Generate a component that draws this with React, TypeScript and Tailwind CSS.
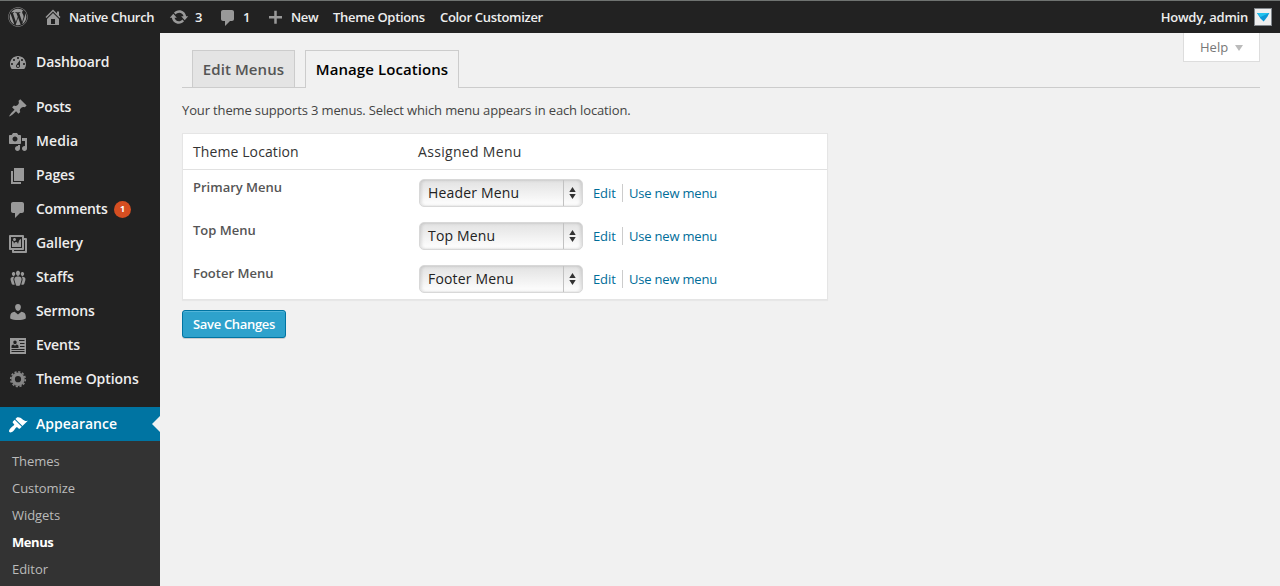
import React from "react";
import { FaWordpress } from "react-icons/fa";

const PATHS = {
  dashboard:
    "M3.76 16h12.48c1.1-1.37 1.76-3.11 1.76-5 0-4.42-3.58-8-8-8s-8 3.58-8 8c0 1.89.66 3.63 1.76 5zM10 4c.55 0 1 .45 1 1s-.45 1-1 1-1-.45-1-1 .45-1 1-1zM6 6c.55 0 1 .45 1 1s-.45 1-1 1-1-.45-1-1 .45-1 1-1zm8 0c.55 0 1 .45 1 1s-.45 1-1 1-1-.45-1-1 .45-1 1-1zm-5.37 5.55L12 7v6c0 1.1-.9 2-2 2s-2-.9-2-2c0-.57.24-1.08.63-1.45zM4 10c.55 0 1 .45 1 1s-.45 1-1 1-1-.45-1-1 .45-1 1-1zm12 0c.55 0 1 .45 1 1s-.45 1-1 1-1-.45-1-1 .45-1 1-1zm-5 3c0-.55-.45-1-1-1s-1 .45-1 1 .45 1 1 1 1-.45 1-1z",
  posts:
    "M10.44 3.02l1.82-1.82 6.36 6.35-1.83 1.82c-1.05-.68-2.48-.57-3.41.36l-.75.75c-.92.93-1.04 2.35-.35 3.41l-1.83 1.82-2.41-2.41-2.8 2.79c-.42.42-3.38 2.71-3.8 2.29s1.86-3.39 2.28-3.81l2.79-2.79L4.1 9.36l1.83-1.82c1.05.69 2.48.57 3.4-.36l.75-.75c.93-.92 1.05-2.35.36-3.41z",
  media:
    "M13 11V4c0-.55-.45-1-1-1h-1.67L9 1H5L3.67 3H2c-.55 0-1 .45-1 1v7c0 .55.45 1 1 1h10c.55 0 1-.45 1-1zM7 4.5c1.38 0 2.5 1.12 2.5 2.5S8.38 9.5 7 9.5 4.5 8.38 4.5 7 5.62 4.5 7 4.5zM14 6h5v10.5c0 1.38-1.12 2.5-2.5 2.5S14 17.88 14 16.5s1.12-2.5 2.5-2.5c.17 0 .34.02.5.05V9h-3V6zm-4 8.05V13h2v3.5c0 1.38-1.12 2.5-2.5 2.5S7 17.88 7 16.5 8.12 14 9.5 14c.17 0 .34.02.5.05z",
  pages: "M6 15V2h10v13H6zm-1 1h8v2H3V5h2v11z",
  comments:
    "M5 2h9c1.1 0 2 .9 2 2v7c0 1.1-.9 2-2 2h-2l-5 5v-5H5c-1.1 0-2-.9-2-2V4c0-1.1.9-2 2-2z",
  gallery:
    "M16 4h1.96c.57 0 1.04.47 1.04 1.04v12.92c0 .57-.47 1.04-1.04 1.04H5.04C4.47 19 4 18.53 4 17.96V16H2.04C1.47 16 1 15.53 1 14.96V2.04C1 1.47 1.47 1 2.04 1h12.92c.57 0 1.04.47 1.04 1.04V4zM3 14h11V3H3v11zm5-8.5C8 4.67 7.33 4 6.5 4S5 4.67 5 5.5 5.67 7 6.5 7 8 6.33 8 5.5zm2 4.5s1-5 3-5v8H4V7c2 0 2 3 2 3s.33-2 2-2 2 2 2 2zm7 7V6h-1v8.96c0 .57-.47 1.04-1.04 1.04H6v1h11z",
  staffs:
    "M8.03 4.46c-.29 1.28.55 3.46 1.97 3.46 1.41 0 2.25-2.18 1.96-3.46-.22-.98-1.08-1.63-1.96-1.63-.89 0-1.74.65-1.97 1.63zm-4.13.9c-.25 1.08.47 2.93 1.67 2.93s1.92-1.85 1.67-2.93c-.19-.83-.92-1.39-1.67-1.39s-1.48.56-1.67 1.39zm8.86 0c-.25 1.08.47 2.93 1.66 2.93 1.2 0 1.92-1.85 1.67-2.93-.19-.83-.92-1.39-1.67-1.39-.74 0-1.47.56-1.66 1.39zm-.59 11.43l1.25-4.3C14.2 10 12.71 8.47 10 8.47c-2.72 0-4.21 1.53-3.44 4.02l1.26 4.3C8.05 17.51 9 18 10 18c.98 0 1.94-.49 2.17-1.21zm-6.1-7.63c-.49.67-.96 1.83-.42 3.59l1.12 3.79c-.34.2-.77.31-1.2.31-.85 0-1.65-.41-1.85-1.03l-1.07-3.65c-.65-2.11.61-3.4 2.92-3.4.27 0 .54.02.79.06-.1.1-.2.22-.29.33zm8.35-.39c2.31 0 3.58 1.29 2.92 3.4l-1.07 3.65c-.2.62-1 1.03-1.85 1.03-.43 0-.86-.11-1.2-.31l1.11-3.77c.55-1.78.08-2.94-.42-3.61-.08-.11-.18-.23-.28-.33.25-.04.51-.06.79-.06z",
  sermons:
    "M10 2c1.7 0 2.9 1.3 2.9 3.1S11.700 9 10 9 7.100 6.900 7.100 5.100 8.300 2 10 2zM6.600 9.800L10 12.600l3.400-2.800c2.600.3 4.400 1.700 4.400 4.600v2.100c-2 1-4.800 1.500-7.800 1.500s-5.800-.5-7.800-1.500v-2.100c0-2.900 1.800-4.300 4.400-4.600z",
  events:
    "M2 2h16v16H2V2zm5 2.500c-1 0-1.700.8-1.700 1.800S6 8.300 7 8.300s1.700-1 1.700-2-.7-1.800-1.700-1.800zM3.500 12h7v-1.600c0-1.100-.9-1.700-2-1.800L7 9.800 5.500 8.600c-1.100.1-2 .7-2 1.800V12zM11 4v1h5.500V4H11zm1 3v1h4.500V7H12zm0 3v1h4.500v-1H12zm-8.500 3v1h13v-1h-13zm0 2v1h13v-1h-13z",
  appearance:
    "M14.480 11.060L7.410 3.990l1.500-1.500c.5-.56 2.300-.47 3.510.32 1.210.8 1.430 1.280 2.910 2.100 1.180.64 2.450 1.260 4.450.85zm-.71.71L6.700 4.700 4.930 6.470c-.39.39-.39 1.020 0 1.410l1.060 1.060c.39.39.39 1.030 0 1.420-.6.6-1.430 1.110-2.210 1.690-.35.26-.7.53-1.010.84C1.430 14.230.4 16.080 1.400 17.070c.99 1 2.840-.03 4.180-1.360.31-.31.58-.66.85-1.020.57-.78 1.080-1.610 1.690-2.210.39-.39 1.020-.39 1.410 0l1.060 1.060c.39.39 1.020.39 1.410 0z",
  home: "M16 8.500l1.530 1.530-1.060 1.060L10 4.600l-6.470 6.490-1.060-1.060L10 2.500l4 4v-2h2v4zm-6-2.460l6 5.990V18H4v-5.970zM12 17v-5H8v5h4z",
  update:
    "M10.200 3.280c3.530 0 6.430 2.610 6.920 6h2.080l-3.500 4-3.500-4h2.320c-.45-1.970-2.210-3.450-4.320-3.450-1.450 0-2.730.71-3.540 1.780L4.950 5.660C6.230 4.200 8.110 3.280 10.200 3.280zm-.4 13.440c-3.520 0-6.430-2.610-6.920-6H.8l3.500-4c1.170 1.330 2.330 2.670 3.500 4H5.480c.45 1.970 2.210 3.450 4.320 3.450 1.450 0 2.730-.71 3.540-1.780l1.710 1.950c-1.280 1.460-3.150 2.380-5.250 2.380z",
  plus: "M17 9v2.500h-5.250v5.250h-2.500V11.500H4V9h5.250V3.750h2.500V9z",
};

type IconName = keyof typeof PATHS | "gear";

function Icon({ name }: { name: IconName }) {
  if (name === "gear") {
    return (
      <svg viewBox="0 0 20 20" className="size-5 shrink-0" fill="none" stroke="#858585">
        <circle cx="10" cy="9.200" r="4.900" strokeWidth="3.600" />
        <circle cx="10" cy="9.200" r="7.300" strokeWidth="1.600" strokeDasharray="2.200 1.622" />
      </svg>
    );
  }
  return (
    <svg viewBox="0 0 20 20" className="size-5 shrink-0" fill="currentColor" fillRule="evenodd">
      <path d={PATHS[name]} />
    </svg>
  );
}

type NavEntry = { icon: IconName; label: string; badge?: string; tracking?: string };

function NavItem({ icon, label, badge, tracking = "tracking-[-0.1px]" }: NavEntry) {
  return (
    <a className="flex h-[34px] items-center pl-2 text-[#eee]">
      <span className="mt-0.5 text-[#999]">
        <Icon name={icon} />
      </span>
      <span className={`mb-0.5 ml-2 text-[14px] font-semibold ${tracking}`}>{label}</span>
      {badge && (
        <span className="ml-[6.500px] flex size-[17px] items-center justify-center rounded-full bg-[#d54e21] text-[9px] font-bold text-white">
          {badge}
        </span>
      )}
    </a>
  );
}

const NAV: NavEntry[] = [
  { icon: "posts", label: "Posts", tracking: "tracking-[-0.25px]" },
  { icon: "media", label: "Media", tracking: "tracking-[0.1px]" },
  { icon: "pages", label: "Pages", tracking: "tracking-[-0.15px]" },
  { icon: "comments", label: "Comments", badge: "1", tracking: "tracking-[-0.25px]" },
  { icon: "gallery", label: "Gallery" },
  { icon: "staffs", label: "Staffs", tracking: "tracking-[-0.1px]" },
  { icon: "sermons", label: "Sermons" },
  { icon: "events", label: "Events", tracking: "tracking-[-0.1px]" },
  { icon: "gear", label: "Theme Options", tracking: "tracking-[-0.05px]" },
];

function AdminBar() {
  return (
    <header className="flex h-[33px] shrink-0 items-center border-t border-[#6f7371] bg-[#222] text-[13px] font-semibold tracking-[-0.32px] text-[#eee]">
      <FaWordpress className="ml-2 size-5 text-[#999]" />
      <span className="ml-[15px] text-[#999]">
        <Icon name="home" />
      </span>
      <span className="mt-0.5 ml-[6px] w-[100px]">Native Church</span>
      <span className="text-[#999]">
        <Icon name="update" />
      </span>
      <span className="mt-0.5 ml-[6px] w-[23px]">3</span>
      <span className="mt-0.5 text-[#999]">
        <Icon name="comments" />
      </span>
      <span className="mt-0.5 ml-[5px] w-[22px]">1</span>
      <span className="text-[#999]">
        <Icon name="plus" />
      </span>
      <span className="mt-0.5 ml-[6px] w-[42px]">New</span>
      <span className="mt-0.5 w-[107px]">Theme Options</span>
      <span className="mt-0.5">Color Customizer</span>
      <span className="mt-0.5 ml-auto tracking-[-0.25px]">Howdy, admin</span>
      <span className="mr-2 ml-[6px] flex size-[18px] items-center justify-center border border-[#82878c] bg-[#eee]">
        <svg viewBox="0 0 16 16" className="size-4">
          <path d="M2 4h12.300L12.500 7.500 8.700 12.500 5.500 9.500z" fill="#0d97d6" />
          <path d="M2 4h12.300L5.500 8z" fill="#22c3ee" />
        </svg>
      </span>
    </header>
  );
}

function Sidebar() {
  return (
    <nav className="flex w-40 shrink-0 flex-col bg-[#222] pt-3">
      <NavItem icon="dashboard" label="Dashboard" />
      <div className="mt-[11px]">
        {NAV.map((n) => (
          <NavItem key={n.label} {...n} />
        ))}
      </div>
      <a className="mt-[11px] flex h-[34px] items-center bg-[#0074a2] pl-2 text-white">
        <span className="mt-0.5">
          <Icon name="appearance" />
        </span>
        <span className="mb-0.5 ml-2 text-[14px] font-semibold">Appearance</span>
        <svg viewBox="0 0 8 16" className="ml-auto h-4 w-2" fill="#f1f1f1">
          <path d="M8 0v16L0 8z" />
        </svg>
      </a>
      <div className="flex-1 bg-[#333] pt-[7px] text-[13px] text-[#bbb]">
        {["Themes", "Customize", "Widgets", "Menus", "Editor"].map((s) => (
          <a
            key={s}
            className={
              s === "Menus"
                ? "flex h-[27px] items-center pl-3 font-bold tracking-[-0.45px] text-white"
                : "flex h-[27px] items-center pl-3 tracking-[-0.05px]"
            }
          >
            {s}
          </a>
        ))}
      </div>
    </nav>
  );
}

function MenuSelect({ value }: { value: string }) {
  return (
    <button className="flex h-7 w-[164px] items-stretch rounded-[5px] border border-[#d8d8d8] bg-linear-to-b from-[#e2e2e2] to-white text-left shadow-[inset_2px_0_3px_rgba(0,0,0,0.1),inset_-2px_0_3px_rgba(0,0,0,0.1)]">
      <span className="flex w-[143px] items-center pb-0.5 pl-2 text-[14px] tracking-[0.17px] text-[#222]">
        {value}
      </span>
      <span className="flex flex-1 items-center justify-center border-l border-[#c2c2c2] pr-px">
        <svg viewBox="0 0 7 12" className="h-3 w-[7px]" fill="#333">
          <path d="M3.500 0L6.700 5H.3zM3.500 12L.3 7h6.400z" />
        </svg>
      </span>
    </button>
  );
}

function LocationRow({ name, value }: { name: string; value: string }) {
  return (
    <div className="flex h-[43px] pl-[10px]">
      <div className="w-[226px] pt-[7px] text-[13px] leading-5 font-semibold text-[#555]">{name}</div>
      <div className="mt-[9px] flex h-7 items-center text-[13px] text-[#006d99]">
        <MenuSelect value={value} />
        <a className="mt-0.5 ml-[10px] w-[29px] tracking-[-0.1px]">Edit</a>
        <span className="flex h-[18px] items-center border-l border-[#ccc] pl-[6px]">
          <a className="mt-0.5 tracking-[-0.2px]">Use new menu</a>
        </span>
      </div>
    </div>
  );
}

function Main() {
  return (
    <main className="flex flex-1 flex-col bg-[#f1f1f1] pr-5 pl-[22px]">
      <div className="flex h-[55px] border-b border-[#ccc] pl-[10px]">
        <a className="mt-[17px] flex h-[37px] w-[103px] items-center justify-center border border-b-0 border-[#ccc] bg-[#e4e4e4] text-[15px] font-semibold tracking-[0.1px] text-[#555]">
          Edit Menus
        </a>
        <a className="mt-[17px] ml-[10px] flex h-[38px] w-[154px] items-center justify-center border border-b-0 border-[#ccc] bg-[#f1f1f1] pb-px text-[15px] font-semibold tracking-[0.08px] text-black">
          Manage Locations
        </a>
        <a className="ml-auto flex h-[29px] w-[77px] items-center border border-t-0 border-[#ddd] bg-white pt-px pl-4 text-[13px] text-[#777]">
          Help
          <svg viewBox="0 0 8 6" className="ml-[7px] h-1.5 w-2" fill="#bbb">
            <path d="M0 0h8L4 6z" />
          </svg>
        </a>
      </div>
      <p className="mt-3 text-[13px] leading-5 tracking-[-0.14px] text-[#444]">
        Your theme supports 3 menus. Select which menu appears in each location.
      </p>
      <section className="mt-[13px] h-[167px] w-[646px] border border-[#e5e5e5] bg-white shadow-[0_1px_1px_rgba(0,0,0,0.04)]">
        <div className="flex h-9 items-center border-b border-[#e1e1e1] pl-[10px] text-[14px] text-[#333]">
          <span className="w-[225px] tracking-[0.1px]">Theme Location</span>
          <span className="tracking-[0.32px]">Assigned Menu</span>
        </div>
        <LocationRow name="Primary Menu" value="Header Menu" />
        <LocationRow name="Top Menu" value="Top Menu" />
        <LocationRow name="Footer Menu" value="Footer Menu" />
      </section>
      <button className="mt-[10px] h-7 w-[104px] rounded-[3px] border border-[#0074a2] bg-[#2ea2cc] pt-px text-[13px] font-semibold tracking-[-0.32px] text-white shadow-[inset_0_1px_0_rgba(120,200,230,0.5),0_1px_0_rgba(0,0,0,0.15)]">
        Save Changes
      </button>
    </main>
  );
}

export default function App() {
  return (
    <div className="flex h-[586px] w-[1280px] flex-col overflow-hidden font-['Open_Sans',sans-serif] whitespace-nowrap">
      <AdminBar />
      <div className="flex min-h-0 flex-1">
        <Sidebar />
        <Main />
      </div>
    </div>
  );
}
